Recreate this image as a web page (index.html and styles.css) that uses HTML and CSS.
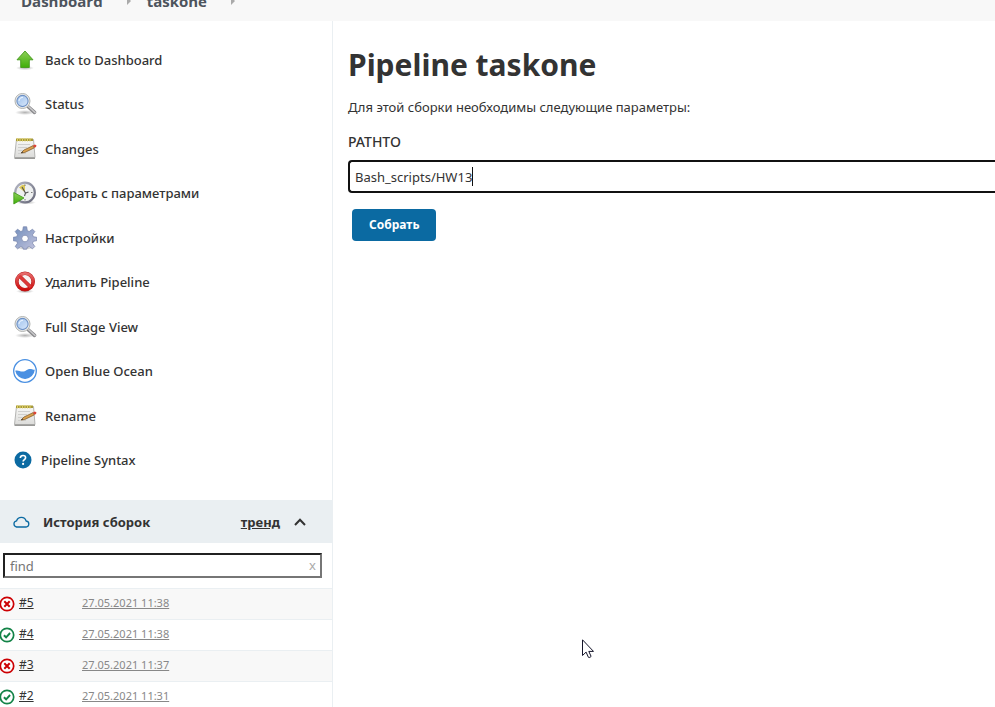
FILE: index.html
```html
<!DOCTYPE html>
<html lang="ru">
<head>
<meta charset="utf-8">
<title>Pipeline taskone</title>
<link rel="stylesheet" href="styles.css">
</head>
<body>
<svg class="defs" aria-hidden="true">
  <defs>
    <linearGradient id="green" x1="0" y1="0" x2="0" y2="1"><stop offset="0" stop-color="#8fd05a"/><stop offset="1" stop-color="#3fae08"/></linearGradient>
    <linearGradient id="lens" x1="0" y1="0" x2="1" y2="1"><stop offset="0" stop-color="#9dc0ec"/><stop offset="1" stop-color="#d9e8fb"/></linearGradient>
    <linearGradient id="paper" x1="0" y1="0" x2="0" y2="1"><stop offset="0" stop-color="#f8f8f6"/><stop offset="1" stop-color="#dcdcda"/></linearGradient>
    <linearGradient id="steel" x1="0" y1="0" x2="1" y2="1"><stop offset="0" stop-color="#6f8dbb"/><stop offset="1" stop-color="#c4c4de"/></linearGradient>
    <linearGradient id="rim" x1="0" y1="0" x2="1" y2="1"><stop offset="0" stop-color="#b4b6c3"/><stop offset="1" stop-color="#666879"/></linearGradient>
    <linearGradient id="red" x1="0" y1="0" x2="0" y2="1"><stop offset="0" stop-color="#e66a6a"/><stop offset="1" stop-color="#cc0c0c"/></linearGradient>
    <radialGradient id="shade"><stop offset="0" stop-color="#000" stop-opacity=".3"/><stop offset="1" stop-color="#000" stop-opacity="0"/></radialGradient>
  </defs>
  <symbol id="search" viewBox="0 0 24 24">
    <ellipse cx="12" cy="20.500" rx="10" ry="2.500" fill="url(#shade)"/>
    <path d="M15.500 15l6 5.300" stroke="#88888b" stroke-width="3.600" stroke-linecap="round"/>
    <path d="M15.500 14.500l6.500 6" stroke="#c9c9cb" stroke-width="1.600" stroke-linecap="round"/>
    <circle cx="9.500" cy="9" r="7.500" fill="#eeeeec" stroke="#b0b2b0" stroke-width="1"/>
    <circle cx="9.500" cy="9" r="5.600" fill="url(#lens)" stroke="#6d90c4" stroke-width="1.100"/>
    <path d="M6 9a3.500 3.500 0 0 1 4-3.500" stroke="#e5f0fd" stroke-width="1.200" fill="none"/>
  </symbol>
  <symbol id="notepad" viewBox="0 0 24 24">
    <path d="M3.500 2.500h17l1.500 18H1.500z" fill="url(#paper)" stroke="#b4b4b2"/>
    <path d="M1.500 20.500H22v1.500H1.500z" fill="#999997"/>
    <path d="M3 1.500h17v2.500H3z" fill="#a79a38"/>
    <path d="M4.500 1v3.500M7 1v3.500M9.500 1v3.500M12 1v3.500M14.500 1v3.500M17 1v3.500" stroke="#dfd06c" stroke-width="1"/>
    <path d="M5 7.500h12M5 10.500h9M5 13.500h7M5 16.500h8" stroke="#cfcfcd"/>
    <path d="M8 16l3-3 9-4.300 1.200 2.200-9.500 4.600z" fill="#dba14d" stroke="#85602e" stroke-width=".8"/>
    <path d="M20 8.300l2-.8 1.500 1-.5 1.500-1.500.8z" fill="#dc4436"/>
    <path d="M8 16l1.300-1.600.9 1z" fill="#333"/>
  </symbol>
  <symbol id="failed" viewBox="0 0 16 16">
    <circle cx="8" cy="8" r="6.700" fill="#fff" stroke="#cc0003" stroke-width="1.700"/>
    <path d="M5.300 5.300l5.400 5.400M10.700 5.300l-5.400 5.400" stroke="#cc0003" stroke-width="2"/>
  </symbol>
  <symbol id="passed" viewBox="0 0 16 16">
    <circle cx="8" cy="8" r="6.700" fill="#fff" stroke="#138347" stroke-width="1.700"/>
    <path d="M4.900 8.200l2.200 2.100 4-4.300" fill="none" stroke="#138347" stroke-width="1.900"/>
  </symbol>
</svg>

<header class="topbar">
  <nav class="crumbs">
    <a href="#">Dashboard</a>
    <svg class="sep" viewBox="0 0 4 8"><path d="M0 0l4 4-4 4z" fill="#aaa"/></svg>
    <a href="#">taskone</a>
    <svg class="sep" viewBox="0 0 4 8"><path d="M0 0l4 4-4 4z" fill="#aaa"/></svg>
  </nav>
</header>

<div class="page">
  <aside class="side">
    <nav>
      <ul class="tasks">
        <li><a href="#"><svg class="icon" viewBox="0 0 24 24"><ellipse cx="12" cy="20" rx="9" ry="2.300" fill="url(#shade)"/><path d="M12 3l8 8.800h-3.700v7.700H7.700v-7.700H4z" fill="url(#green)" stroke="#449a1c" stroke-width=".9"/></svg>Back to Dashboard</a></li>
        <li><a href="#"><svg class="icon"><use href="#search"/></svg>Status</a></li>
        <li><a href="#"><svg class="icon"><use href="#notepad"/></svg>Changes</a></li>
        <li><a href="#"><svg class="icon" viewBox="0 0 24 24"><ellipse cx="13" cy="21.500" rx="10" ry="2" fill="url(#shade)"/><circle cx="12" cy="11.500" r="9.800" fill="#eef0f0" stroke="url(#rim)" stroke-width="2.200"/><path d="M12 11.500L6 6.500q2.500-3 6-3z" fill="#dcc858"/><path d="M9 6l3.500 6 3-1M12.500 12l-1 3" fill="none" stroke="#555" stroke-width="1.100"/><path d="M12 3.500v1.500M19.500 11.500H18M12 19.500V18" stroke="#777"/><path d="M.8 11.500l10.200 5.500L.8 23z" fill="url(#green)" stroke="#3d9916" stroke-width=".8"/></svg>Собрать с параметрами</a></li>
        <li><a href="#"><svg class="icon" viewBox="0 0 24 24"><ellipse cx="12" cy="22" rx="9" ry="1.800" fill="url(#shade)"/><path fill="url(#steel)" stroke="#7380a8" stroke-width=".7" fill-rule="evenodd" d="M10.300.8h3.400l.6 3.900 1.900.8 3.300-2.300 2.300 2.300-2.300 3.300.8 1.900 3.400.6v3.400l-3.400.6-.8 1.900 2.300 3.300-2.300 2.300-3.300-2.300-1.900.8-.6 1.900h-3.400l-.6-1.900-1.900-.8-3.300 2.300-2.300-2.300 2.300-3.300-.8-1.900-3.400-.6v-3.400l3.400-.6.8-1.900-2.300-3.300 2.300-2.300 3.300 2.300 1.900-.8zM12 9.200a3.300 3.300 0 1 0 0 6.600 3.300 3.300 0 0 0 0-6.600z"/></svg>Настройки</a></li>
        <li><a href="#"><svg class="icon" viewBox="0 0 24 24"><ellipse cx="12" cy="21.300" rx="9" ry="2" fill="url(#shade)"/><circle cx="12" cy="11.500" r="8.200" fill="#f8f3f3" stroke="#b52020" stroke-width="3.600"/><path d="M6.200 5.700l11.600 11.600" stroke="#b52020" stroke-width="3.600"/><circle cx="12" cy="11.500" r="8.200" fill="none" stroke="url(#red)" stroke-width="2.800"/><path d="M6.200 5.700l11.600 11.600" stroke="#dc3838" stroke-width="2.800"/></svg>Удалить Pipeline</a></li>
        <li><a href="#"><svg class="icon"><use href="#search"/></svg>Full Stage View</a></li>
        <li><a href="#"><svg class="icon" viewBox="0 0 24 24"><circle cx="12" cy="12" r="11.300" fill="#fff" stroke="#4a90e2" stroke-width="1.300"/><path d="M2.200 11.800c2.500-1.300 4.500.8 7.300.8 4 0 4.500-3.300 8.500-2.600 1.500.3 2.500.9 3.800.8A9.900 9.900 0 0 1 2.200 11.800z" fill="#4a90e2"/></svg>Open Blue Ocean</a></li>
        <li><a href="#"><svg class="icon"><use href="#notepad"/></svg>Rename</a></li>
        <li><a class="help" href="#"><svg class="icon small" viewBox="0 0 20 20"><circle cx="10" cy="10" r="8.500" fill="#0b6aa2"/><path d="M7.300 8q.2-2.500 2.700-2.500 2.600 0 2.600 2.200c0 1.800-2.500 1.900-2.500 3.800" fill="none" stroke="#fff" stroke-width="1.600"/><circle cx="10.100" cy="13.900" r="1.100" fill="#fff"/></svg>Pipeline Syntax</a></li>
      </ul>
    </nav>

    <section class="history">
      <div class="history-head">
        <svg class="cloud" viewBox="0 0 18 14"><path d="M4.500 12h9a3 3 0 0 0 .6-6A5 5 0 0 0 4.600 5.800 3.150 3.150 0 0 0 4.500 12z" fill="none" stroke="#0b6aa2" stroke-width="1.300"/></svg>
        <h2>История сборок</h2>
        <a href="#">тренд</a>
        <button class="fold" type="button" aria-label="Свернуть"><svg viewBox="0 0 12 8"><path d="M1 7l5-5.300L11 7" fill="none" stroke="#333" stroke-width="2"/></svg></button>
      </div>
      <div class="find">
        <input type="text" placeholder="find" aria-label="find">
        <button class="clear" type="button">x</button>
      </div>
      <table class="builds">
        <tr><td><svg class="ball"><use href="#failed"/></svg><a href="#">#5</a></td><td><a href="#">27.05.2021 11:38</a></td></tr>
        <tr><td><svg class="ball"><use href="#passed"/></svg><a href="#">#4</a></td><td><a href="#">27.05.2021 11:38</a></td></tr>
        <tr><td><svg class="ball"><use href="#failed"/></svg><a href="#">#3</a></td><td><a href="#">27.05.2021 11:37</a></td></tr>
        <tr><td><svg class="ball"><use href="#passed"/></svg><a href="#">#2</a></td><td><a href="#">27.05.2021 11:31</a></td></tr>
      </table>
    </section>
  </aside>

  <main class="main">
    <h1>Pipeline taskone</h1>
    <p>Для этой сборки необходимы следующие параметры:</p>
    <form>
      <label for="pathto">PATHTO</label>
      <div class="field"><input id="pathto" type="text" value="Bash_scripts/HW13"><span class="caret"></span></div>
      <button class="build" type="button">Собрать</button>
    </form>
  </main>
</div>
<svg class="pointer" viewBox="0 0 12 20"><path d="M.5.800v15.700l3.600-3.400 2.300 5.200q1.600.7 2.700-.9l-2.300-5h4.700z" fill="#fff" stroke="#15152a"/></svg>
</body>
</html>
```
FILE: styles.css
```css
* { box-sizing: border-box; }

html, body { height: 100%; overflow: hidden; }

body {
  margin: 0;
  display: flex;
  flex-direction: column;
  background: #fff;
  color: #333;
  font: 13px/20px "Noto Sans", "Open Sans", sans-serif;
}

a { color: inherit; }
ul, h1, h2, p { margin: 0; padding: 0; }
button, input { font: inherit; color: inherit; }
button { padding: 0; border: 0; background: none; }

.defs { position: absolute; width: 0; height: 0; }

.topbar {
  flex: none;
  height: 21px;
  overflow: hidden;
  background: #f8f8f8;
}

.crumbs {
  display: flex;
  align-items: center;
  height: 40px;
  margin-top: -19px;
  padding-left: 21px;
  color: #4d545d;
  font-family: "Open Sans", "Noto Sans", sans-serif;
  font-size: 15px;
  font-weight: 700;
}
.crumbs a { text-decoration: none; }
.sep { width: 4px; height: 8px; margin: 0 16px 0 24px; }

.page { flex: 1; display: flex; min-height: 0; }

.side {
  flex: none;
  width: 333px;
  border-right: 1px solid #eaeff2;
}

.tasks { list-style: none; padding: 27px 13px 28px; }
.tasks li { margin-bottom: 20px; }
.tasks li:nth-child(even) { margin-bottom: 21px; }
.tasks li:last-child { margin-bottom: 0; }
.tasks a {
  display: flex;
  align-items: center;
  gap: 8px;
  height: 24px;
  font-weight: 500;
  text-decoration: none;
}
.icon { width: 24px; height: 24px; }
.icon.small { width: 20px; height: 20px; }

.history-head {
  display: flex;
  align-items: center;
  height: 43px;
  padding: 0 26px 0 12px;
  background: #eaeff2;
  font-weight: 700;
}
.history-head h2 { flex: 1; margin-left: 13px; font-size: 13px; }
.cloud { width: 18px; height: 14px; }
.fold { width: 12px; margin-left: 14px; }
.fold svg { display: block; width: 12px; height: 8px; }

.find { position: relative; margin: 10px 10px 10px 3px; }
.find input {
  display: block;
  width: 100%;
  height: 25px;
  padding: 0 20px 0 5px;
  border: 2px inset #767676;
  background: #fff;
}
.find input::placeholder { color: #757575; }
.clear { position: absolute; top: 2px; right: 6px; color: #aaa; }

.builds { width: 100%; border-collapse: collapse; font-size: 12px; }
.builds td { height: 31px; padding: 0 0 2px; border-top: 1px solid #eaeff2; }
.builds td:first-child { width: 82px; }
.builds td:last-child { color: #888; font-size: 11px; }
.builds tr:nth-child(odd) { background: #f8f8f8; }
.ball { width: 16px; height: 16px; margin: 0 4px 0 -1px; vertical-align: middle; }

.main { flex: 1; min-width: 0; padding: 24px 0 0 15px; }
h1 { margin-bottom: 12px; font-size: 30px; line-height: 40px; font-weight: 700; }
.main p { margin-bottom: 15px; }
.main label { display: block; margin-bottom: 8px; font-size: 14px; font-weight: 500; }
.field { position: relative; }
.field input {
  display: block;
  width: 100%;
  height: 33px;
  padding: 0 5px;
  border: 2px solid #111;
  border-right: 0;
  border-radius: 4px 0 0 4px;
  outline: 0;
}
.caret { position: absolute; left: 124px; top: 7px; width: 1px; height: 19px; background: #111; }
.build {
  height: 32px;
  margin: 16px 4px;
  padding: 0 17px;
  border-radius: 4px;
  background: #0b6aa2;
  color: #fff;
  font-size: 12px;
  font-weight: 700;
}

.pointer { position: absolute; left: 582px; top: 639px; width: 12px; height: 20px; }
```
